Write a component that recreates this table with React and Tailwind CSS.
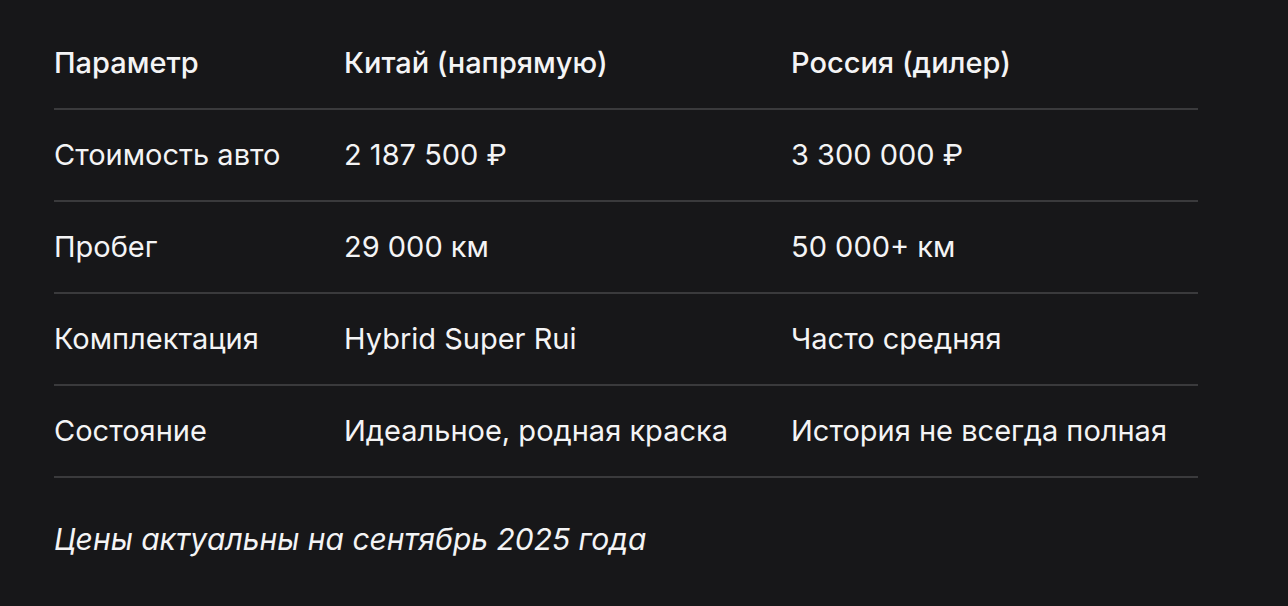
import React from 'react';

const rows = [
    ['Стоимость авто', '2 187 500 ₽', '3 300 000 ₽'],
    ['Пробег', '29 000 км', '50 000+ км'],
    ['Комплектация', 'Hybrid Super Rui', 'Часто средняя'],
    ['Состояние', 'Идеальное, родная краска', 'История не всегда полная'],
];

export default function App() {
    return (
        <div className="min-h-screen bg-[#171719] text-[#f4f4f5] font-['Inter',sans-serif] pl-[54px] pr-[90px] pt-[18px]">
            <div className="w-[1144px]">
                {/* Header */}
                <div className="grid grid-cols-[290px_447px_1fr] h-[92px] items-center border-b-2 border-[#3a3a3c] text-[29px] font-medium">
                    <div>Параметр</div>
                    <div>Китай (напрямую)</div>
                    <div>Россия (дилер)</div>
                </div>

                {rows.map((row) => (
                    <div
                        key={row[0]}
                        className="grid grid-cols-[290px_447px_1fr] h-[92px] items-center border-b-2 border-[#3a3a3c] text-[29px]"
                    >
                        {row.map((cell, i) => (
                            <div key={i}>{cell}</div>
                        ))}
                    </div>
                ))}
            </div>

            <p className="mt-[39px] text-[30px] italic">Цены актуальны на сентябрь 2025 года</p>
        </div>
    );
}
